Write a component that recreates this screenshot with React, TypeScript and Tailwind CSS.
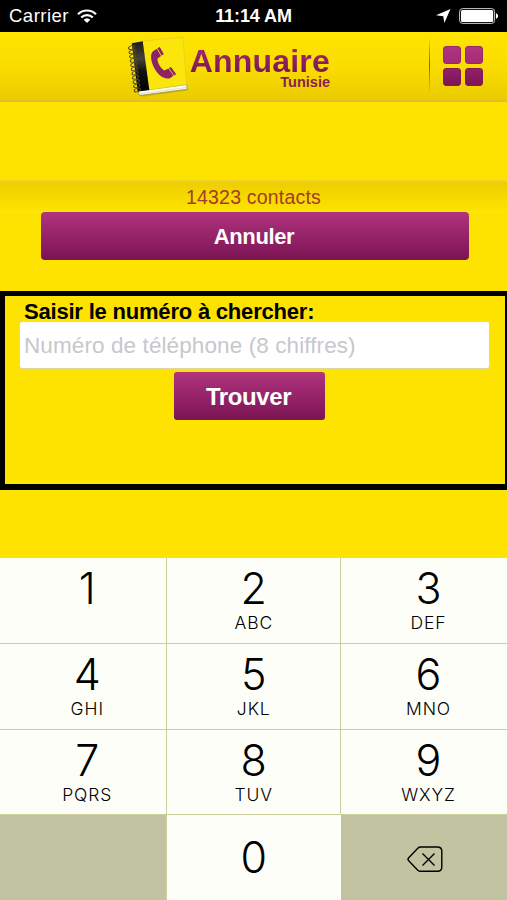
import { clsx } from 'clsx';

const KEYS = [
  { digit: '1', letters: '' },
  { digit: '2', letters: 'ABC' },
  { digit: '3', letters: 'DEF' },
  { digit: '4', letters: 'GHI' },
  { digit: '5', letters: 'JKL' },
  { digit: '6', letters: 'MNO' },
  { digit: '7', letters: 'PQRS' },
  { digit: '8', letters: 'TUV' },
  { digit: '9', letters: 'WXYZ' },
];

const COLUMN_PADDING = ['pl-[9px]', 'pl-[1px]', 'pl-[9px]'];

const RINGS = [0, 1, 2, 3, 4, 5, 6, 7, 8, 9, 10];

function StatusBar() {
  return (
    <div className="grid h-8 grid-cols-[1fr_auto_1fr] items-center bg-black pl-[9px] pr-[9px] text-white">
      <div className="flex items-center gap-[8px]">
        <span className="text-[18.5px] leading-8 tracking-[0.5px]">Carrier</span>
        <svg width="20" height="15" viewBox="0 0 20 15" fill="none" stroke="#fff" strokeWidth="2.2">
          <path d="M1 5.2a12.800 12.800 0 0 1 18 0" />
          <path d="M4.200 8.500a8.200 8.200 0 0 1 11.600 0" />
          <path d="M6.700 10.700a4.800 4.800 0 0 1 6.600 0L10 14z" fill="#fff" stroke="none" />
        </svg>
      </div>
      <span className="text-[18px] font-bold leading-8 tracking-[-0.1px]">11:14 AM</span>
      <div className="flex items-center justify-end gap-[8px]">
        <svg width="15" height="14" viewBox="0 0 15 14">
          <path d="M14.500 0 8.300 14 7.300 7.200 0 6.300z" fill="#fff" />
        </svg>
        <svg width="39" height="16" viewBox="0 0 39 16">
          <rect x="0.6" y="0.6" width="35" height="14.8" rx="3" fill="none" stroke="#ccc" strokeWidth="1" />
          <rect x="2" y="2" width="32.2" height="12" rx="1.6" fill="#fff" />
          <path d="M37 5.200c1.600.600 2 1.600 2 2.800s-.400 2.200-2 2.800z" fill="#fff" />
        </svg>
      </div>
    </div>
  );
}

function PhoneBook() {
  return (
    <svg width="62" height="64" viewBox="0 0 62 64">
      <defs>
        <linearGradient id="spine" x1="0" y1="0" x2="0" y2="1">
          <stop offset="0" stopColor="#1c1a14" />
          <stop offset="0.35" stopColor="#45423a" />
          <stop offset="0.6" stopColor="#111" />
          <stop offset="1" stopColor="#000" />
        </linearGradient>
      </defs>
      <path d="M12 61 60 54 61 56.500 16 62.800z" fill="#b9a416" opacity="0.6" />
      <path d="M11 57 59.500 50.500 60.500 55.200 12.500 61.500z" fill="#fffdf0" stroke="#938b48" strokeWidth="0.8" />
      <path d="M13 59.800 60 53.400" stroke="#d9d3b0" strokeWidth="0.7" />
      <path d="M15.500 7 55.700 3 59.700 50.500 22 56z" fill="#fbe60c" stroke="#d8c63c" strokeWidth="0.6" />
      <path d="M4.700 9.200 15.700 7.200 22.300 56 10.700 57.500z" fill="url(#spine)" />
      {RINGS.map((n) => (
        <ellipse
          key={n}
          cx={4.6 + n * 0.57}
          cy={13.5 + n * 4.25}
          rx="3.2"
          ry="1.7"
          fill="none"
          stroke="#514c25"
          strokeWidth="1"
          transform={`rotate(-18 ${4.6 + n * 0.57} ${13.5 + n * 4.25})`}
        />
      ))}
      <path
        d="M25.800 17.500 29.800 14.800 34 22 30.400 24.800C30.600 29 33 33.500 37.200 36.500L41.500 34.500 46.500 41.800 42.500 44.600C35.500 44.900 30.500 40.500 27 33.500 23.700 27 23 20.500 25.800 17.500Z"
        fill="#8e2266"
      />
      <path d="M30.400 14.300 32.800 13 36.800 20.200 34.600 21.600z M42 34.100 43.900 33 49.200 40.300 47.100 41.600z" fill="#8e2266" />
    </svg>
  );
}

function Header() {
  return (
    <header className="grid h-[70px] grid-cols-[127px_1fr_78px] border-b-2 border-[#d9c22c] bg-linear-to-b from-[#ffe500] via-[#fadd00] to-[#ebcb00]">
      <div />
      <div className="flex">
        <div className="pt-[2px]">
          <PhoneBook />
        </div>
        <div className="flex w-[141px] flex-col items-end pt-[15px] font-bold">
          <span className="bg-linear-to-b from-[#a62a73] to-[#741650] bg-clip-text text-[32px] leading-[28px] tracking-[0.2px] text-transparent">
            Annuaire
          </span>
          <span className="text-[14.500px] leading-[15px] text-[#861e50]">Tunisie</span>
        </div>
      </div>
      <div className="flex items-start gap-[13px]">
        <div className="mt-1 h-[58px] w-px bg-linear-to-b from-transparent via-[#76680d] to-transparent" />
        <div className="mt-[14px] grid grid-cols-2 gap-1">
          <span className="h-[18px] w-[18px] rounded-[3px] border border-[#982768] bg-linear-to-b from-[#b13480] to-[#a52c76]" />
          <span className="h-[18px] w-[18px] rounded-[3px] border border-[#982768] bg-linear-to-b from-[#b13480] to-[#a52c76]" />
          <span className="h-[18px] w-[18px] rounded-[3px] border border-[#80185a] bg-linear-to-b from-[#93206a] to-[#7b1454]" />
          <span className="h-[18px] w-[18px] rounded-[3px] border border-[#80185a] bg-linear-to-b from-[#93206a] to-[#7b1454]" />
        </div>
      </div>
    </header>
  );
}

function Key({ digit, letters, index }: { digit: string; letters: string; index: number }) {
  return (
    <button
      className={clsx(
        'flex flex-col items-center border-b border-[#cdcf9c] bg-[#fefef9] pt-[5px] text-black',
        index % 3 !== 2 && 'border-r',
        COLUMN_PADDING[index % 3],
      )}
    >
      <span className="text-[43px] font-light leading-[51px]">{digit}</span>
      <span className="text-[17.500px] font-light leading-[18px] tracking-[0.9px]">{letters}</span>
    </button>
  );
}

function Keypad() {
  return (
    <div className="grid h-[342px] grid-cols-[166.500px_174.500px_1fr] grid-rows-[86px_86px_85px_85px] font-['Inter','Liberation_Sans',sans-serif]">
      {KEYS.map((key, i) => (
        <Key key={key.digit} digit={key.digit} letters={key.letters} index={i} />
      ))}
      <div className="border-r border-[#cdcf9c] bg-[#c2c3a0]" />
      <button className="flex items-center justify-center bg-[#fefef9] text-[43px] font-light text-black">0</button>
      <button className="flex items-center bg-[#c2c3a0] pl-[66px] pt-1">
        <svg width="36" height="27" viewBox="0 0 36 27" fill="none" stroke="#000" strokeWidth="1.4">
          <path d="M13.500 1H30.500Q34.800 1 34.800 5.300V21Q34.800 25.300 30.500 25.300H13.500Q12 25.300 10.800 24.200L1.500 14.600Q.5 13.300 1.500 12L10.800 2.200Q12 1 13.500 1Z" />
          <path d="m15.500 7.500 12 12m0-12-12 12" />
        </svg>
      </button>
    </div>
  );
}

export default function App() {
  return (
    <div className="flex h-[900px] w-[507px] flex-col overflow-hidden bg-[#fee200] font-['Liberation_Sans',Arial,sans-serif]">
      <StatusBar />
      <Header />

      <div className="mt-[78px] flex h-8 items-center justify-center border-t-2 border-b border-t-[#eed32c] border-b-[#f3df50] bg-linear-to-b from-[#edce00] to-[#fee200] pt-[3px]">
        <span className="text-[19.500px] tracking-[0.2px] text-[#a23c2a]">14323 contacts</span>
      </div>
      <button className="ml-[41px] h-12 w-[428px] shrink-0 rounded-[4px] bg-linear-to-b from-[#b0337f] to-[#7b1453] pr-[2px] text-[22px] font-bold tracking-[-0.4px] text-white">
        Annuler
      </button>

      <section className="mt-[31px] flex h-[199px] flex-col border-t-[5px] border-r-2 border-b-[6px] border-l-[5px] border-black pl-[14px]">
        <label className="pl-[5px] pt-[3px] text-[22px] font-bold leading-[25px] tracking-[-0.2px] text-black">
          Saisir le numéro à chercher:
        </label>
        <input
          className="-mt-[3px] h-[48px] w-[471px] shrink-0 rounded-[3px] border border-[#e0d7a0] bg-white px-1 pt-[2px] text-[22.500px] tracking-[0.1px] text-black placeholder:text-[#c7c7cc]"
          placeholder="Numéro de téléphone (8 chiffres)"
        />
        <button className="ml-[155px] mt-[3px] h-12 w-[151px] shrink-0 rounded-[3px] bg-linear-to-b from-[#b0337f] to-[#7b1453] pr-[2px] pt-px text-[24px] font-bold tracking-[-0.4px] text-white">
          Trouver
        </button>
      </section>

      <div className="mt-auto">
        <Keypad />
      </div>
    </div>
  );
}
